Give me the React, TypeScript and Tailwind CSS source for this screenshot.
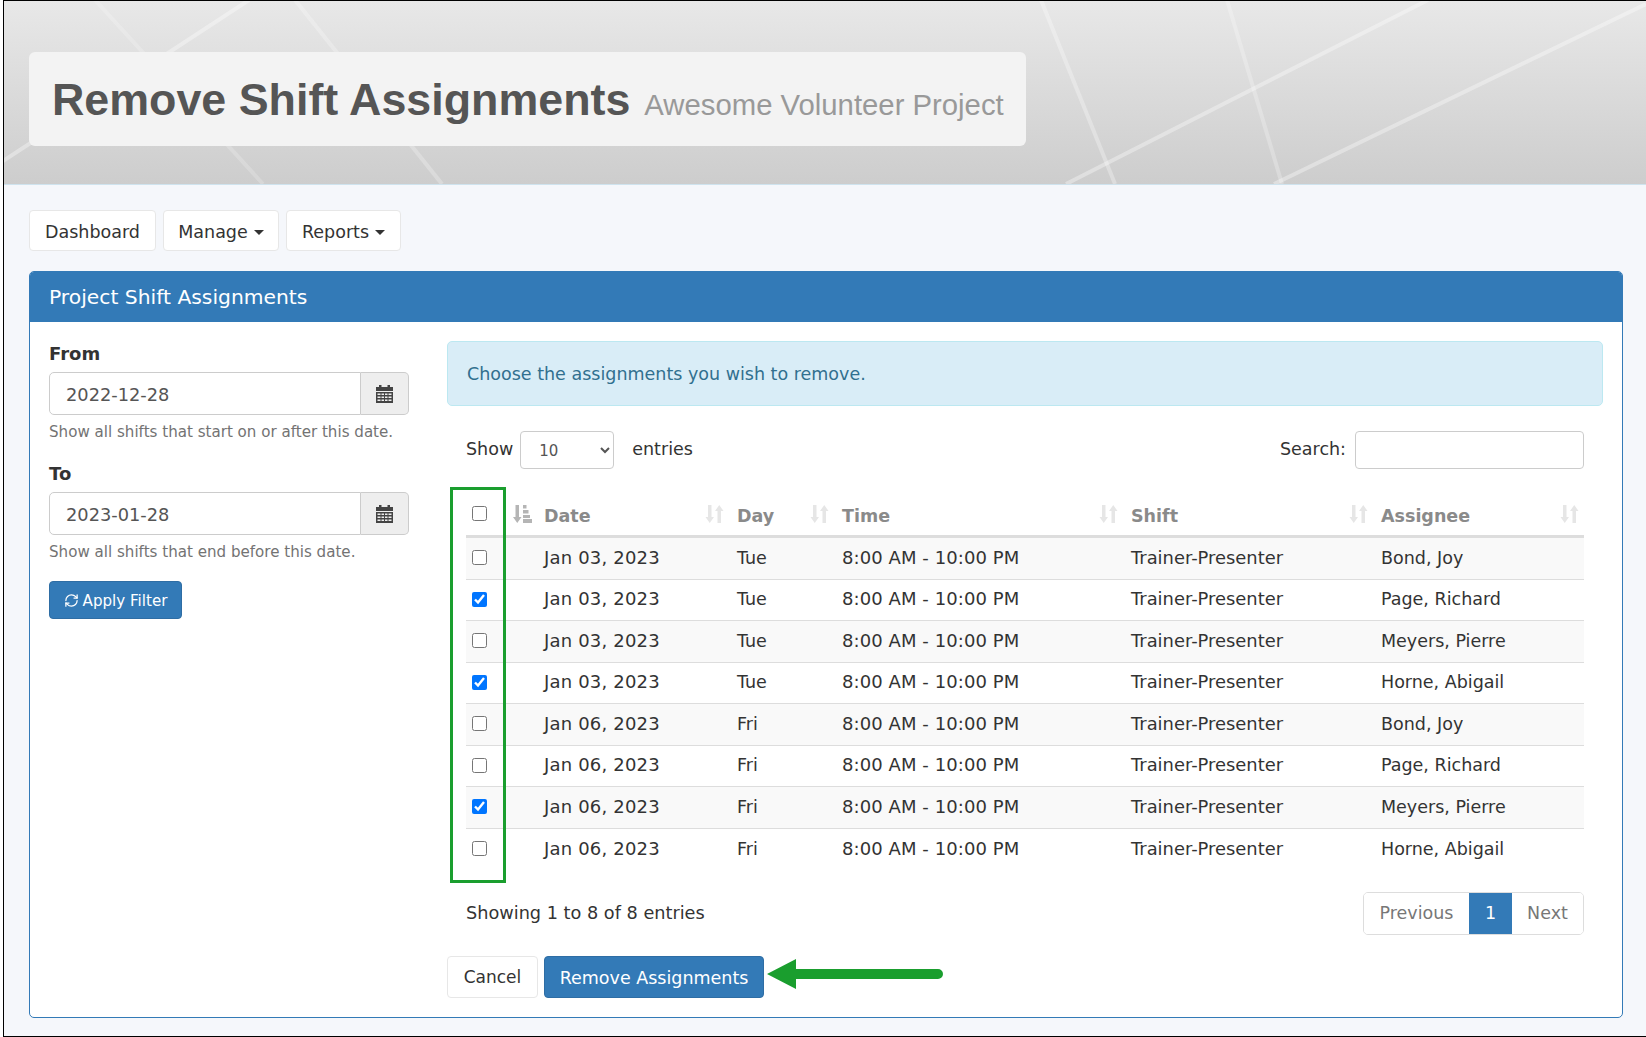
import { RefreshCw } from "lucide-react";

const rows = [
  { date: "Jan 03, 2023", day: "Tue", name: "Bond, Joy", checked: false },
  { date: "Jan 03, 2023", day: "Tue", name: "Page, Richard", checked: true },
  { date: "Jan 03, 2023", day: "Tue", name: "Meyers, Pierre", checked: false },
  { date: "Jan 03, 2023", day: "Tue", name: "Horne, Abigail", checked: true },
  { date: "Jan 06, 2023", day: "Fri", name: "Bond, Joy", checked: false },
  { date: "Jan 06, 2023", day: "Fri", name: "Page, Richard", checked: false },
  { date: "Jan 06, 2023", day: "Fri", name: "Meyers, Pierre", checked: true },
  { date: "Jan 06, 2023", day: "Fri", name: "Horne, Abigail", checked: false },
];

const headers = ["Date", "Day", "Time", "Shift", "Assignee"];

const SortIcon = () => (
  <svg width="19" height="18" viewBox="0 0 19 18" className="shrink-0 text-[#e6e6e6]" fill="currentColor">
    <path d="M3 0h3.500v12H9l-4.250 6L0.500 12H3z" />
    <path d="M12.500 18H16V6h2.500L14.250 0 10 6h2.500z" />
  </svg>
);

const SortActiveIcon = () => (
  <svg width="19" height="18" viewBox="0 0 19 18" className="shrink-0 text-[#b5b5b5]" fill="currentColor">
    <path d="M2.500 0H6v12h2.500l-4.250 6L0 12h2.500z" />
    <rect x="10" y="0" width="3.500" height="3.500" />
    <rect x="10" y="5" width="5.500" height="3.500" />
    <rect x="10" y="10" width="7" height="3" />
    <rect x="10" y="14" width="9" height="4" />
  </svg>
);

const CalendarIcon = () => (
  <svg width="17" height="18" viewBox="0 0 17 18" className="text-[#444]" fill="currentColor">
    <path d="M0 2h3V0h2.500v2h6V0H14v2h3v4H0z" />
    <path
      fillRule="evenodd"
      d="M0 7h17v11H0zM1.500 8.500V10h3V8.500zm4 0V10h2.500V8.500zm3.500 0V10h2.500V8.500zm3.500 0V10h3V8.500zM1.500 11.500V13h3v-1.500zm4 0V13h2.500v-1.500zm3.500 0V13h2.500v-1.500zm3.500 0V13h3v-1.500zM1.500 14.500V16h3v-1.500zm4 0V16h2.500v-1.500zm3.500 0V16h2.500v-1.500zm3.500 0V16h3v-1.500z"
    />
  </svg>
);

const Caret = () => (
  <span className="ml-[6px] inline-block border-x-[5px] border-t-[5px] border-x-transparent border-t-[#333]" />
);

const DateField = ({ value }: { value: string }) => (
  <div className="flex h-[43px] w-[360px]">
    <div className="flex flex-1 items-center rounded-l-[5px] border border-[#ccc] bg-white pl-[16px] pt-[3px] text-[17.800px] text-[#555]">
      {value}
    </div>
    <div className="flex w-[48px] items-center justify-center rounded-r-[5px] border border-l-0 border-[#ccc] bg-[#eee]">
      <CalendarIcon />
    </div>
  </div>
);

const App = () => {
  return (
    <div className="h-[1037px] w-[1646px] overflow-hidden bg-white font-['DejaVu_Sans',sans-serif] text-[17.500px] text-[#333]">
      <div className="ml-[3px] h-full border-y border-l border-black bg-[#f5f7fb]">
        <header className="relative h-[184px] overflow-hidden border-b border-[#cfe3ee] bg-gradient-to-b from-[#e8e8e8] to-[#cdcdcd] pl-[25px] pt-[51px]">
          <svg
            className="absolute inset-0 h-full w-full"
            viewBox="0 0 1642 183"
            preserveAspectRatio="none"
            stroke="#ffffff"
            strokeOpacity="0.35"
            strokeWidth="4"
          >
            <path d="M245 -1L-4 162" />
            <path d="M91 -1L259 183" strokeOpacity="0.2" />
            <path d="M291 -1L438 183" strokeOpacity="0.25" />
            <path d="M1037 -1L1111 183" strokeOpacity="0.3" />
            <path d="M1223 -1L1278 183" strokeOpacity="0.25" />
            <path d="M1424 -1L1062 183" />
            <path d="M1642 3L1270 183" />
          </svg>
          <div className="relative flex h-[94px] w-[997px] items-baseline whitespace-nowrap rounded-[6px] bg-[#f3f3f3] pl-[23px] pt-[17px] font-['Liberation_Sans',sans-serif]">
            <h1 className="text-[44.800px] font-bold leading-[60px] text-[#555]">Remove Shift Assignments</h1>
            <span className="ml-[14px] text-[29.300px] text-[#999]">Awesome Volunteer Project</span>
          </div>
        </header>

        <nav className="ml-[25px] mt-[25px] flex gap-[7px]">
          <a className="flex h-[41px] w-[127px] items-center justify-center rounded-[4px] border border-[#e7e7e7] bg-white pt-[3px]">
            Dashboard
          </a>
          <a className="flex h-[41px] w-[116px] items-center justify-center rounded-[4px] border border-[#e7e7e7] bg-white pt-[3px]">
            Manage
            <Caret />
          </a>
          <a className="flex h-[41px] w-[115px] items-center justify-center rounded-[4px] border border-[#e7e7e7] bg-white pt-[3px]">
            Reports
            <Caret />
          </a>
        </nav>

        <section className="ml-[25px] mt-[20px] h-[747px] w-[1594px] overflow-hidden rounded-[5px] border border-[#337ab7] bg-white">
          <div className="flex h-[50px] items-center bg-[#337ab7] pl-[19px] pt-[1px] text-[20.300px] text-white">
            Project Shift Assignments
          </div>
          <div className="flex gap-[38px] pl-[19px] pr-[19px] pt-[19px]">
            <aside className="w-[360px] shrink-0">
              <label className="block h-[31px] text-[18px] font-bold leading-[26px]">From</label>
              <DateField value="2022-12-28" />
              <p className="mt-[5px] text-[15.100px] leading-[24px] text-[#737373]">Show all shifts that start on or after this date.</p>
              <label className="mt-[17px] block h-[31px] text-[18px] font-bold leading-[26px]">To</label>
              <DateField value="2023-01-28" />
              <p className="mt-[5px] text-[15.100px] leading-[24px] text-[#737373]">Show all shifts that end before this date.</p>
              <button className="mt-[17px] flex h-[38px] w-[133px] items-center justify-center gap-[4px] rounded-[4px] border border-[#2e6da4] bg-[#337ab7] pt-[2px] text-[15.100px] text-white">
                <RefreshCw size={15} className="-mt-[2px]" />
                Apply Filter
              </button>
            </aside>

            <div className="flex-1">
              <div className="flex h-[65px] items-center rounded-[5px] border border-[#bce8f1] bg-[#d9edf7] pl-[19px] pt-[2px] text-[#31708f]">
                Choose the assignments you wish to remove.
              </div>

              <div className="px-[19px]">
                <div className="mt-[25px] flex h-[38px] items-center justify-between">
                  <div className="flex items-center">
                    <span className="pb-[1px]">Show</span>
                    <select className="ml-[7px] h-[38px] w-[94px] rounded-[4px] border border-[#ccc] bg-white pl-[14px] pt-[2px] text-[15px] text-[#555]">
                      <option>10</option>
                    </select>
                    <span className="ml-[18px] pb-[1px]">entries</span>
                  </div>
                  <div className="flex items-center">
                    <span className="pb-[1px]">Search:</span>
                    <input className="ml-[9px] h-[38px] w-[229px] rounded-[4px] border border-[#ccc] bg-white" />
                  </div>
                </div>

                <div className="relative mt-[18px]">
                  <table className="w-[1118px] table-fixed border-separate border-spacing-0">
                    <colgroup>
                      <col className="w-[70px]" />
                      <col className="w-[193px]" />
                      <col className="w-[105px]" />
                      <col className="w-[289px]" />
                      <col className="w-[250px]" />
                      <col className="w-[211px]" />
                    </colgroup>
                    <thead>
                      <tr>
                        <th className="h-[51px] border-b-[3px] border-[#ddd] pl-[6px] pr-[4px] pt-[6px]">
                          <div className="flex items-center justify-between">
                            <input type="checkbox" readOnly className="-mt-[2px] h-[15px] w-[15px]" />
                            <SortActiveIcon />
                          </div>
                        </th>
                        {headers.map((h) => (
                          <th key={h} className="h-[51px] border-b-[3px] border-[#ddd] pl-[8px] pr-[5px] pt-[6px] text-left text-[17.500px] font-bold text-[#8a8a8a]">
                            <div className="flex items-center justify-between">
                              <span className="pt-[4px]">{h}</span>
                              <SortIcon />
                            </div>
                          </th>
                        ))}
                      </tr>
                    </thead>
                    <tbody>
                      {rows.map((r, i) => (
                        <tr key={i} className={i % 2 === 0 ? "bg-[#f9f9f9]" : "bg-white"}>
                          <td className={i < 7 ? "h-[41.500px] border-b border-[#ddd] pb-[1px] pl-[6px]" : "h-[41.500px] pb-[1px] pl-[6px]"}>
                            <input type="checkbox" readOnly checked={r.checked} className="block h-[15px] w-[15px]" />
                          </td>
                          <td className={i < 7 ? "border-b border-[#ddd] px-[8px] pb-[2px] text-[18px] tracking-[0.18px]" : "px-[8px] pb-[2px] text-[18px] tracking-[0.18px]"}>{r.date}</td>
                          <td className={i < 7 ? "border-b border-[#ddd] px-[8px] pb-[1px]" : "px-[8px] pb-[1px]"}>{r.day}</td>
                          <td className={i < 7 ? "border-b border-[#ddd] px-[8px] pb-[2px] text-[18px] tracking-[0.08px]" : "px-[8px] pb-[2px] text-[18px] tracking-[0.08px]"}>8:00 AM - 10:00 PM</td>
                          <td className={i < 7 ? "border-b border-[#ddd] px-[8px] text-[17.900px]" : "px-[8px] text-[17.900px]"}>Trainer-Presenter</td>
                          <td className={i < 7 ? "border-b border-[#ddd] px-[8px] pb-[1px]" : "px-[8px] pb-[1px]"}>{r.name}</td>
                        </tr>
                      ))}
                    </tbody>
                  </table>
                  <div className="pointer-events-none absolute left-[-16px] top-0 h-[396px] w-[56px] border-[3px] border-[#1a9e2e]" />
                </div>

                <div className="mt-[22px] flex h-[43px] items-center justify-between">
                  <span className="text-[17.700px]">Showing 1 to 8 of 8 entries</span>
                  <div className="flex h-[43px] overflow-hidden rounded-[5px] border border-[#ddd] text-[#777]">
                    <a className="flex w-[105px] items-center justify-center bg-white">Previous</a>
                    <a className="flex w-[43px] items-center justify-center bg-[#337ab7] text-white">1</a>
                    <a className="flex w-[71px] items-center justify-center bg-white">Next</a>
                  </div>
                </div>
              </div>

              <div className="mt-[21px] flex h-[42px] items-center gap-[6px]">
                <button className="h-[42px] w-[91px] rounded-[4px] border border-[#e7e7e7] bg-white pt-[2px] text-[17px]">Cancel</button>
                <button className="h-[42px] w-[220px] rounded-[4px] border border-[#2e6da4] bg-[#337ab7] pt-[2px] text-white">
                  Remove Assignments
                </button>
                <svg width="176" height="30" viewBox="0 0 176 30" className="-ml-[3px] -mt-[6px]" fill="#1a9e2e">
                  <path d="M0 15L29 0v10h142a5 5 0 0 1 0 10H29v10z" />
                </svg>
              </div>
            </div>
          </div>
        </section>
      </div>
    </div>
  );
};

export default App;
